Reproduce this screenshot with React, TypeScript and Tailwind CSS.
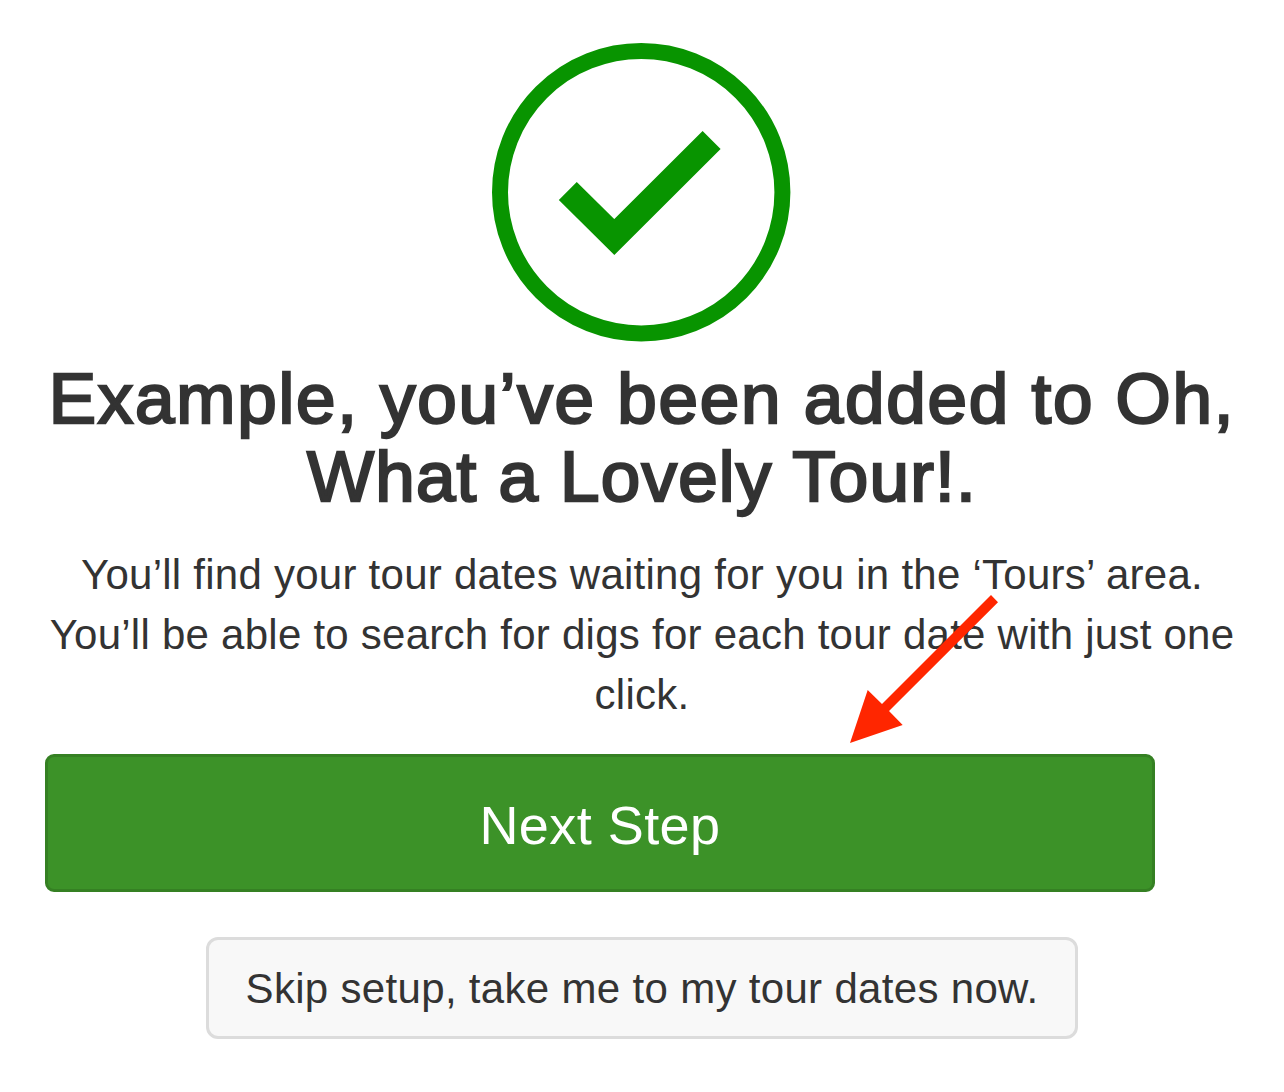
import React from 'react'

const lineClass = 'block whitespace-nowrap'

const SuccessIcon: React.FC = () => (
  <svg className="block h-[300px] w-[300px]" viewBox="0 0 300 300" fill="none">
    <circle cx="150.2" cy="150.2" r="141.2" stroke="#089400" strokeWidth="16" />
    <path d="M76.8 149 L123.300 195 L220.600 98" stroke="#089400" strokeWidth="25.5" />
  </svg>
)

const Arrow: React.FC = () => (
  <svg
    className="pointer-events-none absolute left-[850px] top-[595px] h-[148px] w-[149px]"
    viewBox="0 0 149 148"
  >
    <path d="M141 0 L148 7.200 L39 116 L52.700 130 L0 148 L17.700 95 L32 109 Z" fill="#ff2600" />
  </svg>
)

const App: React.FC = () => {
  return (
    <div className="relative flex h-[1092px] w-[1284px] flex-col items-center overflow-hidden bg-white font-['Liberation_Sans',Arial,sans-serif] text-[#333]">
      <div className="mt-[42px] mr-[2px]">
        <SuccessIcon />
      </div>

      <h1 className="mt-[18px] text-center text-[71px] font-normal leading-[78px] [-webkit-text-stroke:2.4px_#333]">
        <span className={`${lineClass} tracking-[1.75px]`}>Example, you’ve been added to Oh,</span>
        <span className={`${lineClass} tracking-[1.2px]`}>What a Lovely Tour!.</span>
      </h1>

      <p className="mt-[29px] text-center text-[42px] leading-[60px] tracking-[0.25px]">
        <span className={lineClass}>You’ll find your tour dates waiting for you in the ‘Tours’ area.</span>
        <span className={lineClass}>You’ll be able to search for digs for each tour date with just one</span>
        <span className={lineClass}>click.</span>
      </p>

      <button className="mt-[29px] ml-[45px] h-[138px] w-[1110px] self-start rounded-[9px] border-3 border-[#358023] bg-[#3c9228] pt-[4px] text-[54px] tracking-[0.45px] text-white">
        Next Step
      </button>

      <button className="mt-[45px] h-[102px] w-[872px] rounded-[12px] border-3 border-[#dcdcdc] bg-[#f8f8f8] text-[42px] tracking-[0.32px]">
        Skip setup, take me to my tour dates now.
      </button>

      <Arrow />
    </div>
  )
}

export default App
